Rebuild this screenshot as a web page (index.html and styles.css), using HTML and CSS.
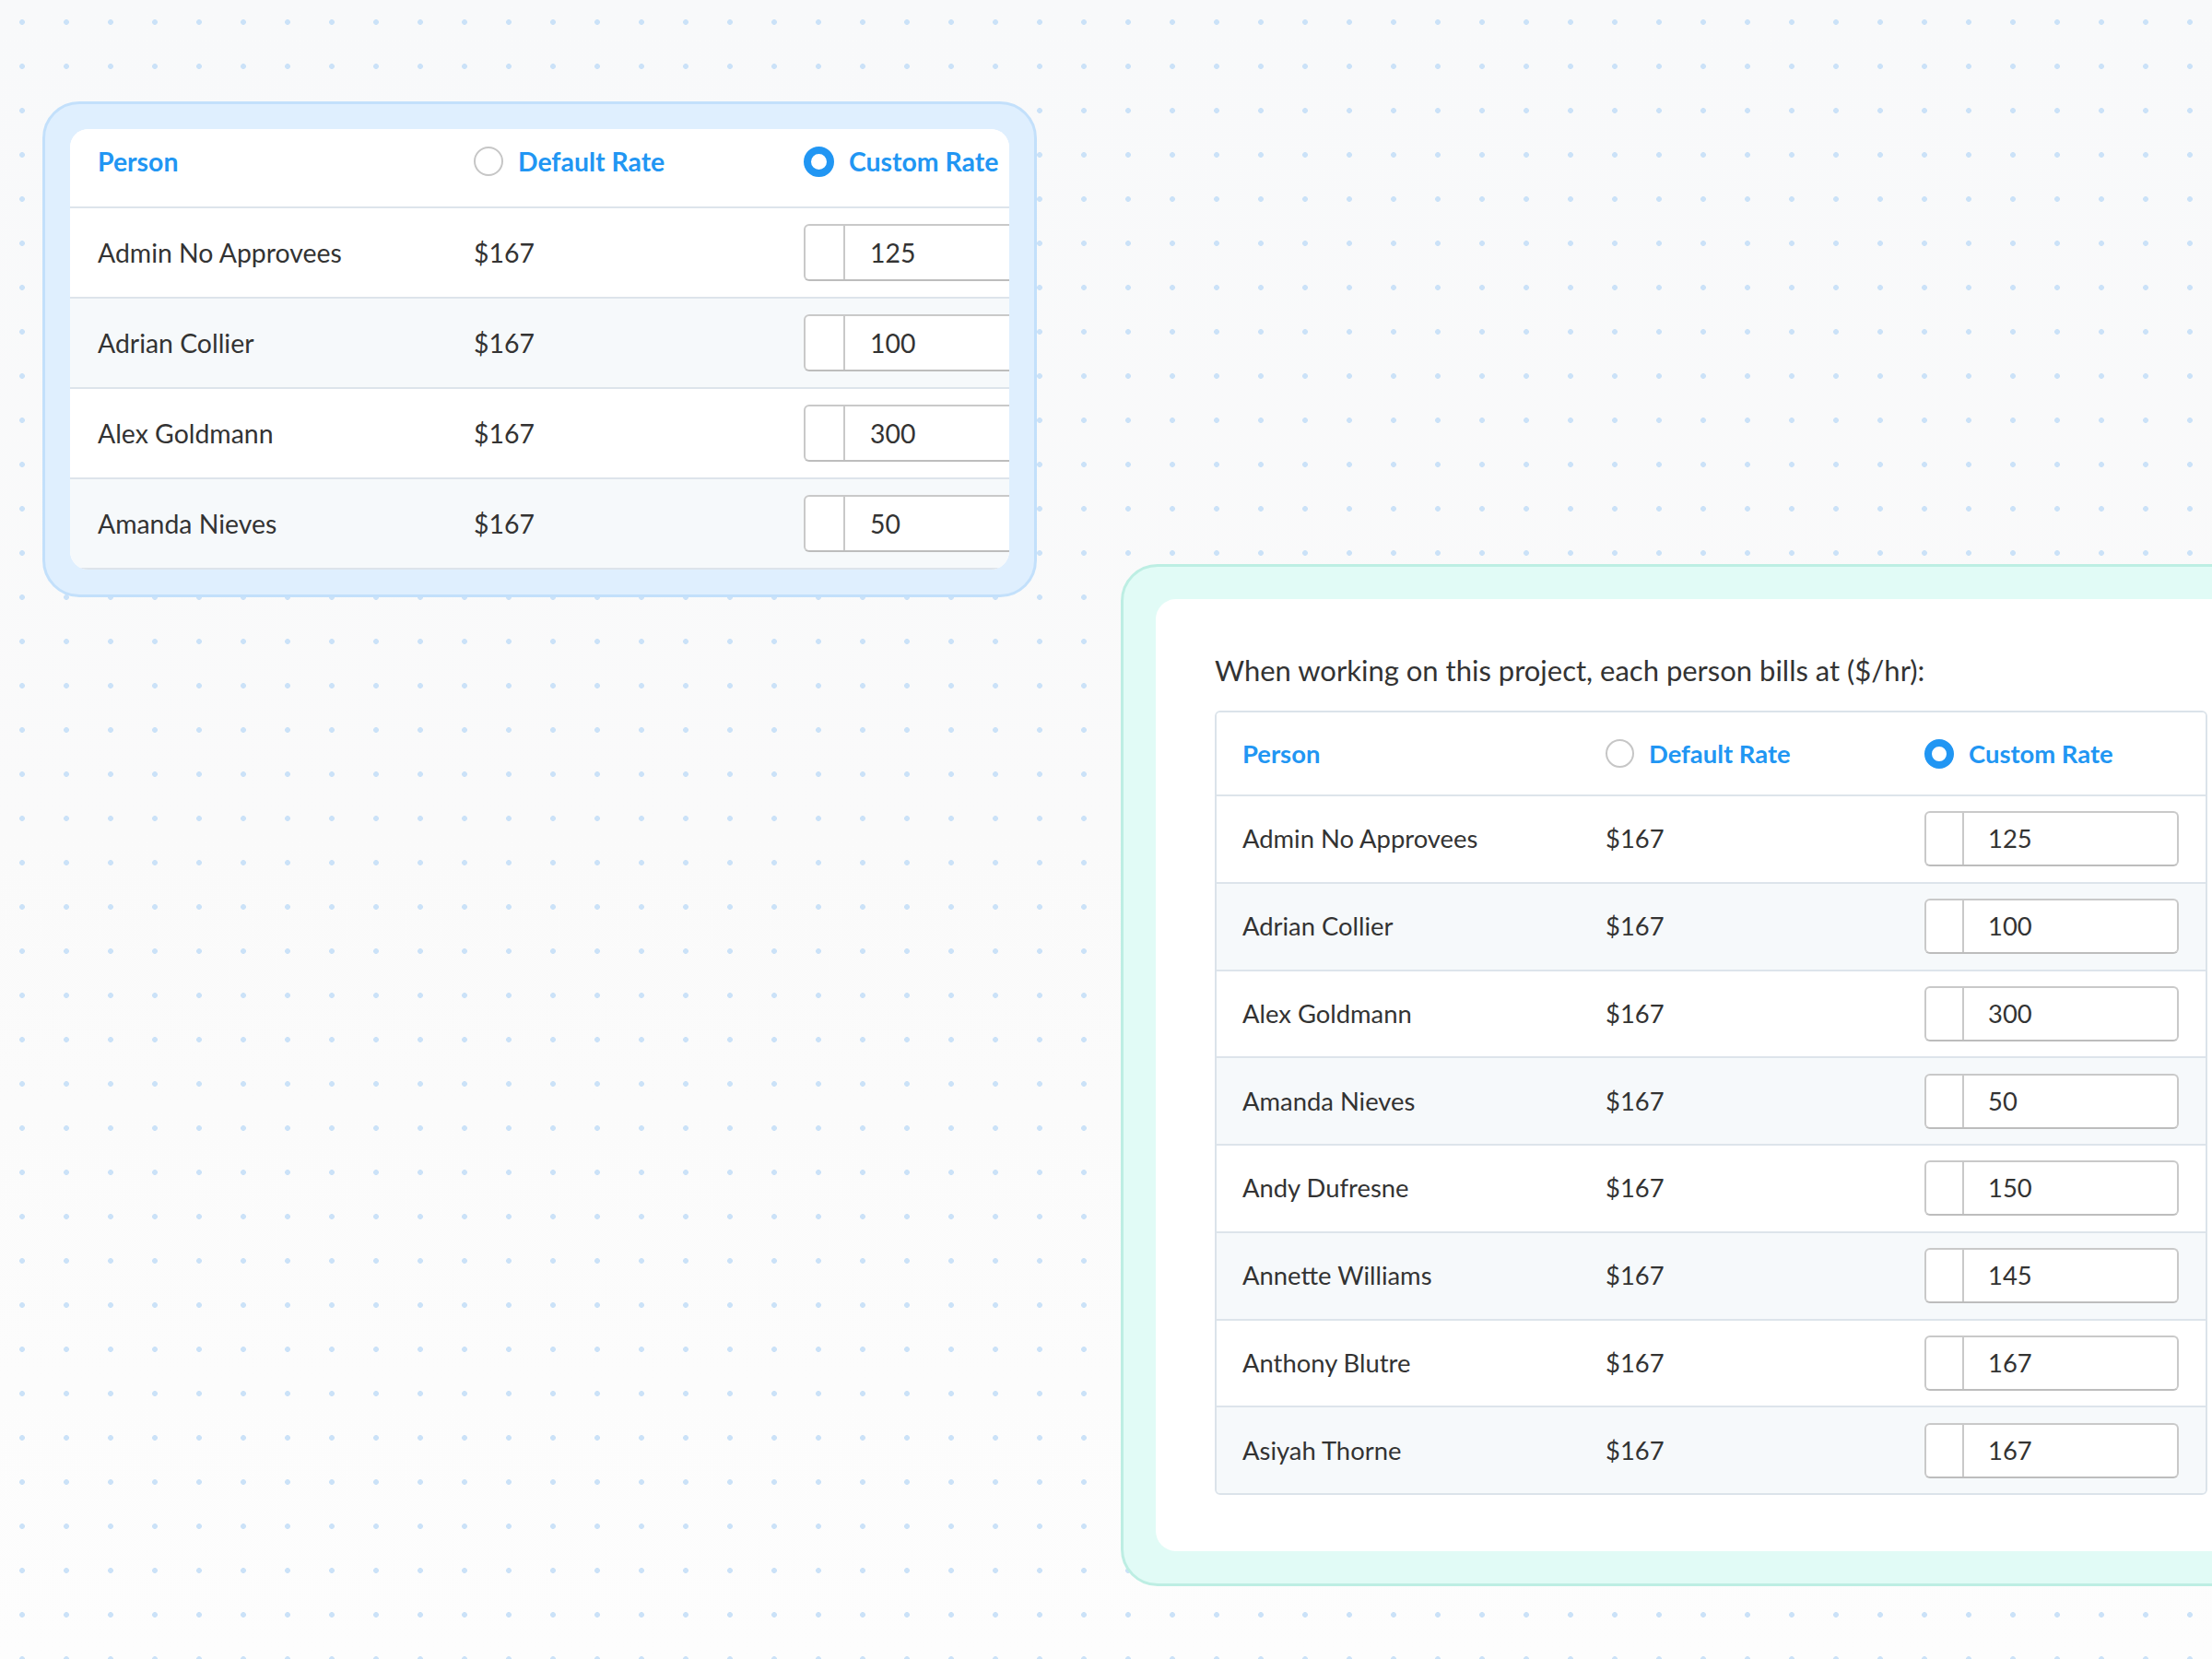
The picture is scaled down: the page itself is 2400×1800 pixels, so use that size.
FILE: index.html
```html
<!DOCTYPE html>
<html lang="en">
<head>
<meta charset="utf-8">
<title>Billing rates</title>
<link rel="stylesheet" href="styles.css">
</head>
<body>
<div class="canvas">
  <section class="frame frame-blue">
    <div class="sheet sheet-blue">
      <div class="rates rates-large">
        <div class="row head">
          <div class="cell">Person</div>
          <div class="cell"><span class="radio"></span>Default Rate</div>
          <div class="cell"><span class="radio on"></span>Custom Rate</div>
        </div>
        <div class="row"><div class="cell">Admin No Approvees</div><div class="cell">$167</div><div class="cell"><div class="field"><span class="addon"></span><span class="val">125</span></div></div></div>
        <div class="row"><div class="cell">Adrian Collier</div><div class="cell">$167</div><div class="cell"><div class="field"><span class="addon"></span><span class="val">100</span></div></div></div>
        <div class="row"><div class="cell">Alex Goldmann</div><div class="cell">$167</div><div class="cell"><div class="field"><span class="addon"></span><span class="val">300</span></div></div></div>
        <div class="row last"><div class="cell">Amanda Nieves</div><div class="cell">$167</div><div class="cell"><div class="field"><span class="addon"></span><span class="val">50</span></div></div></div>
      </div>
    </div>
  </section>

  <section class="frame frame-teal">
    <div class="sheet sheet-teal">
      <p class="lead">When working on this project, each person bills at ($/hr):</p>
      <div class="rates rates-boxed">
        <div class="row head">
          <div class="cell">Person</div>
          <div class="cell"><span class="radio"></span>Default Rate</div>
          <div class="cell"><span class="radio on"></span>Custom Rate</div>
        </div>
        <div class="row"><div class="cell">Admin No Approvees</div><div class="cell">$167</div><div class="cell"><div class="field"><span class="addon"></span><span class="val">125</span></div></div></div>
        <div class="row"><div class="cell">Adrian Collier</div><div class="cell">$167</div><div class="cell"><div class="field"><span class="addon"></span><span class="val">100</span></div></div></div>
        <div class="row"><div class="cell">Alex Goldmann</div><div class="cell">$167</div><div class="cell"><div class="field"><span class="addon"></span><span class="val">300</span></div></div></div>
        <div class="row"><div class="cell">Amanda Nieves</div><div class="cell">$167</div><div class="cell"><div class="field"><span class="addon"></span><span class="val">50</span></div></div></div>
        <div class="row"><div class="cell">Andy Dufresne</div><div class="cell">$167</div><div class="cell"><div class="field"><span class="addon"></span><span class="val">150</span></div></div></div>
        <div class="row"><div class="cell">Annette Williams</div><div class="cell">$167</div><div class="cell"><div class="field"><span class="addon"></span><span class="val">145</span></div></div></div>
        <div class="row"><div class="cell">Anthony Blutre</div><div class="cell">$167</div><div class="cell"><div class="field"><span class="addon"></span><span class="val">167</span></div></div></div>
        <div class="row last"><div class="cell">Asiyah Thorne</div><div class="cell">$167</div><div class="cell"><div class="field"><span class="addon"></span><span class="val">167</span></div></div></div>
      </div>
    </div>
  </section>
</div>
</body>
</html>
```

FILE: styles.css
```css
* { box-sizing: border-box; }

html, body {
  margin: 0;
  padding: 0;
}

body {
  width: 2400px;
  height: 1800px;
  overflow: hidden;
  font-family: Lato, "Open Sans", "Liberation Sans", sans-serif;
  color: #333333;
  background-color: #fbfbfb;
  background-image:
    radial-gradient(circle at 24px 24px, #cbe2f8 0, #cbe2f8 2.6px, rgba(203, 226, 248, 0) 3.2px),
    linear-gradient(180deg, #f8f9fa 0%, #fafafa 50%, #fdfdfd 100%);
  background-size: 48px 48px, 100% 100%;
  background-repeat: repeat, no-repeat;
}

.canvas {
  display: flex;
  align-items: flex-start;
  gap: 91px;
  padding: 110px 0 0 46px;
  width: 2600px;
}

/* outer coloured frames */
.frame {
  flex: none;
  border-style: solid;
  border-width: 3px;
}

.frame-blue {
  width: 1079px;
  padding: 27px;
  border-radius: 40px;
  background: #dfeffe;
  border-color: #c3e0fb;
}

.frame-teal {
  width: 1284px;
  margin-top: 502px;
  padding: 35px;
  border-radius: 40px;
  background: #e1fbf6;
  border-color: #bdeee3;
}

/* white sheets */
.sheet {
  background: #ffffff;
  overflow: hidden;
}

.sheet-blue {
  border-radius: 20px;
}

.sheet-teal {
  border-radius: 22px;
  padding: 58px 0 61px 64px;
}

.lead {
  margin: 0 0 25px;
  font-size: 31px;
  line-height: 38px;
  color: #333333;
  white-space: nowrap;
}

/* table (base size = boxed table) */
.rates {
  font-size: 27.4px;
  width: 1077px;
}

.rates-boxed {
  border: 2px solid #dbe3ea;
  border-radius: 6px;
  overflow: hidden;
}

.row {
  display: grid;
  grid-template-columns: 394px 346px 1fr;
  align-items: center;
  height: 94.75px;
  padding-left: 28px;
  border-bottom: 2px solid #dde4eb;
  background: #ffffff;
}

.row:nth-child(odd) {
  background: #f6f9fb;
}

.row.head {
  background: #ffffff;
  height: 91px;
  color: #2196f3;
  font-weight: 700;
}

.rates-boxed .row.last {
  border-bottom: 0;
  height: 92.75px;
}

.cell {
  display: flex;
  align-items: center;
  white-space: nowrap;
  line-height: 34px;
}

/* radios */
.radio {
  flex: none;
  width: 31px;
  height: 31px;
  margin-right: 16px;
  border-radius: 50%;
  border: 2px solid #c6c6c6;
  background: #ffffff;
}

.radio.on {
  width: 32px;
  height: 32px;
  border: 8px solid #2196f3;
}

/* input */
.field {
  display: flex;
  width: 276px;
  height: 60px;
  border: 2px solid #c9c9c9;
  border-bottom-color: #bdbdbd;
  border-radius: 6px;
  background: #ffffff;
}

.addon {
  flex: none;
  width: 41px;
  border-right: 2px solid #c9c9c9;
}

.val {
  display: flex;
  align-items: center;
  padding-left: 26px;
  color: #333333;
}

/* larger, cropped table in the blue frame */
.rates-large {
  font-size: 28.4px;
  width: 1116px;
}

.rates-large .row {
  grid-template-columns: 408px 358px 1fr;
  height: 98.1px;
  padding-left: 30px;
}

.rates-large .row.head {
  height: 86px;
  padding-bottom: 14px;
}

.rates-large .cell {
  line-height: 35px;
}

.rates-large .radio {
  width: 32px;
  height: 32px;
  margin-right: 16px;
}

.rates-large .radio.on {
  width: 33px;
  height: 33px;
  border-width: 8px;
}

.rates-large .field {
  width: 290px;
  height: 62px;
}

.rates-large .addon {
  width: 43px;
}

.rates-large .val {
  padding-left: 27px;
}
```
